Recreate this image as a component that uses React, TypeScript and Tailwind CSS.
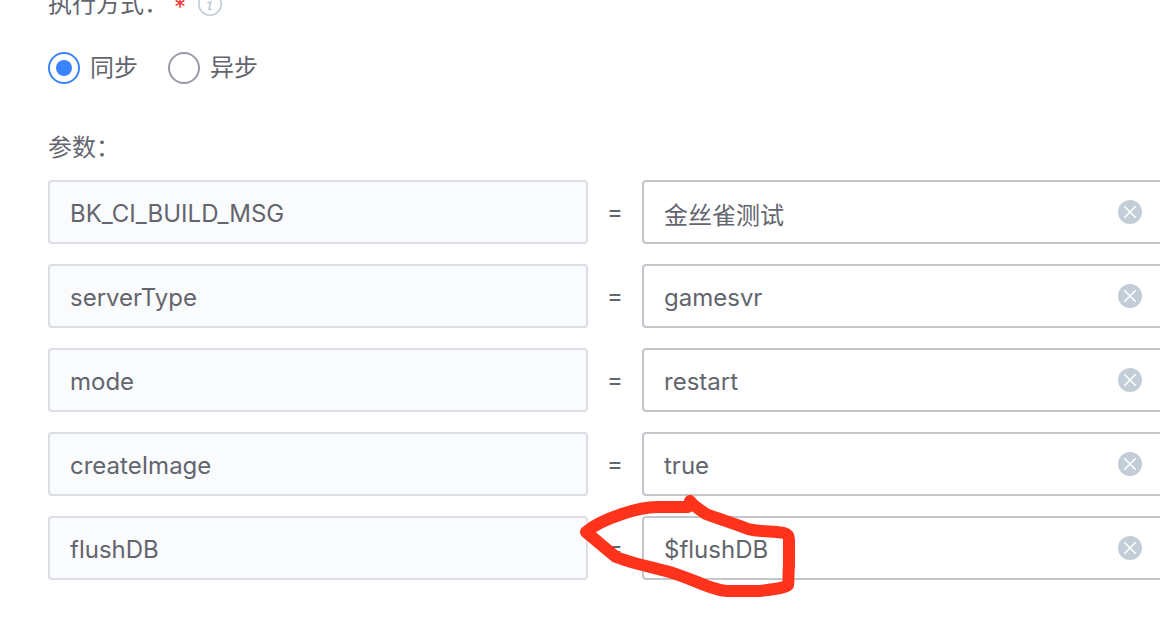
import { useState } from "react";

type Param = { name: string; value: string; marked?: boolean };

const initialParams: Param[] = [
  { name: "BK_CI_BUILD_MSG", value: "金丝雀测试" },
  { name: "serverType", value: "gamesvr" },
  { name: "mode", value: "restart" },
  { name: "createImage", value: "true" },
  { name: "flushDB", value: "$flushDB", marked: true },
];

const modes = [
  { id: "sync", label: "同步" },
  { id: "async", label: "异步" },
];

function InfoIcon() {
  return (
    <svg viewBox="0 0 24 24" className="ml-3 size-6" fill="none" aria-hidden="true">
      <circle cx="12" cy="12" r="11.2" stroke="#c4cdd6" strokeWidth="1.6" />
      <circle cx="13.2" cy="6.6" r="1.4" fill="#c4cdd6" />
      <path d="M9.4 10.9c1.2-.2 2.2-.5 3.4-.9l-1.7 6.6c-.3 1.5.8 1.4 2.3.1" stroke="#c4cdd6" strokeWidth="1.8" />
    </svg>
  );
}

function Marker() {
  return (
    <svg
      viewBox="576 490 224 110"
      className="pointer-events-none absolute -left-3 -top-[26px] z-10 h-[110px] w-56"
      fill="none"
      aria-hidden="true"
    >
      <path
        d="M690 501C693 505 700 510 706 514C719 519 733 523 748 529C759 532 775 531 784 533C788 534 789 536 789 540V566C788 573 789 580 788 585C785 588 775 589 760 591H728C720 591 714 588 707 586C694 581 681 575 666 571C650 567 632 563 616 557C606 549 597 541 586 532C594 525 607 519 622 514C634 510 647 507 657 507H688"
        stroke="#ff321c"
        strokeWidth="12"
        strokeLinecap="round"
        strokeLinejoin="round"
      />
    </svg>
  );
}

export default function App() {
  const [mode, setMode] = useState("sync");
  const [params, setParams] = useState(initialParams);

  const setValue = (index: number, value: string) =>
    setParams(params.map((p, i) => (i === index ? { ...p, value } : p)));

  return (
    <main className="min-h-screen overflow-hidden bg-white font-['Inter','Noto_Sans_CJK_SC',sans-serif] text-2xl leading-8 text-[#63656e]">
      <form className="-mr-[22px] -mt-3 pb-10 pl-12">
        <fieldset>
          <legend className="flex h-8 items-center">
            <span className="w-[126px]">执行方式：</span>
            <span className="pt-2 text-[#ea3636]">*</span>
            <InfoIcon />
          </legend>
          <div className="mt-8 flex gap-[30px]">
            {modes.map((m) => (
              <label key={m.id} className="flex items-center gap-[10px]">
                <input
                  type="radio"
                  name="mode"
                  checked={mode === m.id}
                  onChange={() => setMode(m.id)}
                  className="size-8 appearance-none rounded-full border-2 border-[#979ba5] bg-white bg-clip-content p-1.5 checked:border-[#3a84ff] checked:bg-[#3a84ff]"
                />
                {m.label}
              </label>
            ))}
          </div>
        </fieldset>

        <h2 className="mt-12">参数：</h2>
        <div className="mt-4 flex flex-col gap-5">
          {params.map((p, i) => (
            <div key={p.name} className="grid h-16 grid-cols-[1fr_54px_1fr]">
              <input
                aria-label={`参数名 ${i + 1}`}
                readOnly
                value={p.name}
                className="h-16 w-full min-w-0 rounded-sm border-2 border-[#dcdee5] bg-[#fafbfd] px-5 pt-0.5 outline-none"
              />
              <div className="relative flex items-center justify-center">
                =
                {p.marked && <Marker />}
              </div>
              <div className="relative">
                <input
                  aria-label={p.name}
                  value={p.value}
                  onChange={(e) => setValue(i, e.target.value)}
                  className="h-16 w-full min-w-0 rounded-sm border-2 border-[#c4c6cc] bg-white pl-5 pr-20 pt-0.5 outline-none"
                />
                <button
                  type="button"
                  aria-label="清空"
                  onClick={() => setValue(i, "")}
                  className="absolute right-10 top-5 size-6"
                >
                  <svg viewBox="0 0 24 24" className="size-6" fill="none" aria-hidden="true">
                    <circle cx="12" cy="12" r="12" fill="#c3cdd7" />
                    <path d="m6.3 6.3 11.4 11.4m0-11.4L6.3 17.7" stroke="#fff" strokeWidth="1.6" />
                  </svg>
                </button>
              </div>
            </div>
          ))}
        </div>
      </form>
    </main>
  );
}
